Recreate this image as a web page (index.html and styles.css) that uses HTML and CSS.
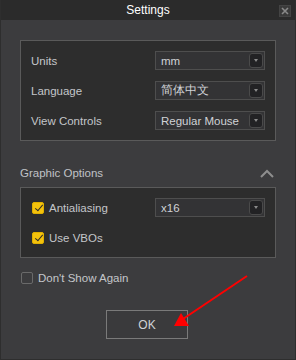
FILE: index.html
```html
<!DOCTYPE html>
<html>
<head>
  <meta charset="UTF-8">
  <title>Settings</title>
  <link rel="stylesheet" href="styles.css">
</head>
<body>
  <div class="window">
    <div class="titlebar">
      <span class="title">Settings</span>
      <span class="close">
        <svg width="8" height="8" viewBox="0 0 8 8"><path d="M1 1L7 7M7 1L1 7" stroke="#8a8a8a" stroke-width="1.6"/></svg>
      </span>
    </div>

    <div class="content">
      <div class="panel">
        <div class="row">
          <span class="label">Units</span>
          <div class="select"><span>mm</span><span class="drop"></span></div>
        </div>
        <div class="row">
          <span class="label">Language</span>
          <div class="select"><span>简体中文</span><span class="drop"></span></div>
        </div>
        <div class="row">
          <span class="label">View Controls</span>
          <div class="select"><span>Regular Mouse</span><span class="drop"></span></div>
        </div>
      </div>

      <div class="group-head">
        <span>Graphic Options</span>
        <svg width="14" height="9" viewBox="0 0 14 9"><path d="M1 8L7 2L13 8" fill="none" stroke="#8e8e8e" stroke-width="2"/></svg>
      </div>

      <div class="panel">
        <div class="row">
          <label class="check"><span class="box on"></span>Antialiasing</label>
          <div class="select"><span>x16</span><span class="drop"></span></div>
        </div>
        <div class="row">
          <label class="check"><span class="box on"></span>Use VBOs</label>
        </div>
      </div>

      <label class="check again"><span class="box"></span>Don't Show Again</label>

      <div class="actions">
        <button class="ok">OK</button>
      </div>
    </div>

    <!-- annotation arrow -->
    <svg class="arrow" width="296" height="360" viewBox="0 0 296 360">
      <line x1="246" y1="276" x2="182" y2="319" stroke="#ff0000" stroke-width="2"/>
      <polygon points="173,326 180,313 188,326" fill="#ff0000"/>
    </svg>
  </div>
</body>
</html>
```

FILE: styles.css
```css
html, body { margin: 0; padding: 0; }
body { background: #3c3c3e; font-family: "Liberation Sans", Arial, sans-serif; font-size: 11.5px; color: #c4c6ca; }

.window {
  position: relative;
  width: 296px;
  height: 360px;
  background: #3c3c3e;
  box-sizing: border-box;
  border: 1px solid #2e2e2e;
  border-top: none;
  overflow: hidden;
}

.titlebar {
  height: 20px;
  background: #2b2b2b;
  display: flex;
  align-items: center;
  justify-content: center;
  position: relative;
}
.title { color: #ffffff; font-size: 12px; }
.close {
  position: absolute;
  right: 4px;
  top: 5px;
  width: 10px;
  height: 10px;
  background: #3a3a3a;
  border: 1px solid #444;
  display: flex;
  align-items: center;
  justify-content: center;
}

.content { padding: 20px 19px 0 19px; }

.panel {
  background: #2d2d2d;
  border: 1px solid #5a5a5a;
  padding: 10px 10px;
  display: flex;
  flex-direction: column;
  gap: 11px;
}
.row {
  display: flex;
  align-items: center;
  justify-content: space-between;
  height: 19px;
}

.select {
  width: 110px;
  height: 19px;
  box-sizing: border-box;
  background: #333335;
  border: 1px solid #4e4e4e;
  display: flex;
  align-items: center;
  justify-content: space-between;
  padding-left: 5px;
  padding-right: 1px;
  color: #d0d2d6;
}
.drop {
  width: 14px;
  height: 15px;
  box-sizing: border-box;
  background: #222224;
  border: 1px solid #4a4a4a;
  border-radius: 3px;
  position: relative;
}
.drop::after {
  content: "";
  position: absolute;
  left: 4px;
  top: 5px;
  border-left: 2.5px solid transparent;
  border-right: 2.5px solid transparent;
  border-top: 3px solid #8a8a8a;
}

.group-head {
  display: flex;
  align-items: center;
  justify-content: space-between;
  height: 20px;
  margin: 22px 0 4px 0;
  padding-right: 2px;
  color: #c0c2c6;
}

.check { display: flex; align-items: center; gap: 5px; }
.box {
  width: 12px;
  height: 12px;
  box-sizing: border-box;
  border: 1px solid #6a6a6a;
  border-radius: 2px;
  position: relative;
}
.box.on { background: #f4c20d; border-color: #e0b000; }
.box.on::after {
  content: "";
  position: absolute;
  left: 3.5px;
  top: 0.5px;
  width: 3px;
  height: 7px;
  border-right: 1.5px solid #2a2a2a;
  border-bottom: 1.5px solid #2a2a2a;
  transform: rotate(40deg);
}
.panel .check { padding-left: 1px; }

.again { margin-top: 14px; padding-left: 1px; }

.actions { display: flex; justify-content: center; margin-top: 26px; padding-right: 2px; }
.ok {
  width: 82px;
  height: 29px;
  background: #3a3a3c;
  border: 1px solid #7a7a7a;
  color: #d0d2d6;
  font-family: "Liberation Sans", Arial, sans-serif;
  font-size: 12px;
}

.arrow { position: absolute; left: 0; top: 0; pointer-events: none; }
```
